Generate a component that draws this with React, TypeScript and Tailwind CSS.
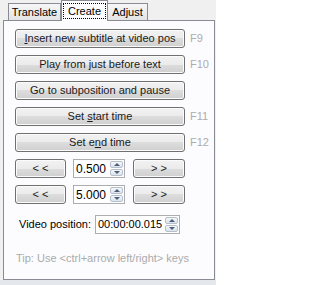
import type { ReactNode } from 'react';

const font = { fontFamily: '"Liberation Sans", Arial, sans-serif' };

function WinButton({ width, children }: { width: string; children: ReactNode }) {
  return (
    <div
      className={`${width} h-[19px] shrink-0 flex items-center justify-center rounded-[3px] border border-[#707070] bg-[linear-gradient(to_bottom,#f2f2f2_0%,#ebebeb_50%,#dddddd_50%,#cfcfcf_100%)] shadow-[inset_0_0_0_1px_#fbfbfb] text-[11px] leading-none text-[#1a1a1a]`}
    >
      {children}
    </div>
  );
}

function Spin() {
  return (
    <div className="flex flex-col w-[13px] h-[15px] gap-[1px]">
      <div className="flex-1 flex items-center justify-center rounded-[2px] border border-[#b6bfcc] bg-[linear-gradient(to_bottom,#f5f7fa,#dde3eb)]">
        <div className="w-0 h-0 border-l-[3px] border-r-[3px] border-b-[3px] border-l-transparent border-r-transparent border-b-[#4a5f7d]" />
      </div>
      <div className="flex-1 flex items-center justify-center rounded-[2px] border border-[#b6bfcc] bg-[linear-gradient(to_bottom,#f5f7fa,#dde3eb)]">
        <div className="w-0 h-0 border-l-[3px] border-r-[3px] border-t-[3px] border-l-transparent border-r-transparent border-t-[#4a5f7d]" />
      </div>
    </div>
  );
}

function NumField({ width, value, size }: { width: string; value: string; size: string }) {
  return (
    <div
      className={`${width} h-[19px] shrink-0 flex items-center justify-between border border-[#abadb3] bg-white pl-[2px] pr-[1px]`}
    >
      <span className={`${size} leading-none text-black`}>{value}</span>
      <Spin />
    </div>
  );
}

function KeyHint({ label }: { label: string }) {
  return <span className="text-[11px] leading-none text-[#adadad]">{label}</span>;
}

export default function App() {
  return (
    <div className="w-[216px] h-[285px] bg-[#f0f0f0] flex flex-col overflow-hidden" style={font}>
      {/* tab strip */}
      <div className="flex items-end h-[20px] pl-[8px]">
        <div className="w-[53px] h-[17px] flex items-center justify-center border border-b-0 border-[#898c95] bg-[linear-gradient(to_bottom,#f7f7f7,#e3e3e3)] text-[11px] leading-none text-black">
          Translate
        </div>
        <div className="relative z-10 -mb-px w-[47px] h-[21px] flex items-start justify-center pt-[2px] border border-b-0 border-[#898c95] bg-[#fcfcfe]">
          <span className="border border-dotted border-black px-[4px] h-[16px] flex items-center text-[11px] leading-none text-black">
            Create
          </span>
        </div>
        <div className="w-[40px] h-[17px] flex items-center justify-center border border-b-0 border-l-0 border-[#898c95] bg-[linear-gradient(to_bottom,#f7f7f7,#e3e3e3)] text-[11px] leading-none text-black">
          Adjust
        </div>
      </div>

      {/* tab page */}
      <div className="ml-[3px] w-[212px] h-[260px] border border-[#898c95] bg-[#fcfcfe] pt-[8px] pl-[11px] flex flex-col">
        <div className="flex flex-col gap-[7px]">
          <div className="flex items-center gap-[5px]">
            <WinButton width="w-[170px]">
              <span>
                <span className="underline">I</span>nsert new subtitle at video pos
              </span>
            </WinButton>
            <KeyHint label="F9" />
          </div>
          <div className="flex items-center gap-[5px]">
            <WinButton width="w-[170px]">Play from just before text</WinButton>
            <KeyHint label="F10" />
          </div>
          <div className="flex items-center gap-[5px]">
            <WinButton width="w-[170px]">Go to subposition and pause</WinButton>
          </div>
          <div className="flex items-center gap-[5px]">
            <WinButton width="w-[170px]">
              <span>
                Set <span className="underline">s</span>tart time
              </span>
            </WinButton>
            <KeyHint label="F11" />
          </div>
          <div className="flex items-center gap-[5px]">
            <WinButton width="w-[170px]">
              <span>
                Set e<span className="underline">n</span>d time
              </span>
            </WinButton>
            <KeyHint label="F12" />
          </div>
          <div className="flex items-center">
            <WinButton width="w-[51px]">&lt; &lt;</WinButton>
            <div className="ml-[7px]">
              <NumField width="w-[52px]" value="0.500" size="text-[12px]" />
            </div>
            <div className="ml-[8px]">
              <WinButton width="w-[52px]">&gt; &gt;</WinButton>
            </div>
          </div>
          <div className="flex items-center">
            <WinButton width="w-[51px]">&lt; &lt;</WinButton>
            <div className="ml-[7px]">
              <NumField width="w-[52px]" value="5.000" size="text-[12px]" />
            </div>
            <div className="ml-[8px]">
              <WinButton width="w-[52px]">&gt; &gt;</WinButton>
            </div>
          </div>
        </div>

        <div className="mt-[11px] flex items-center pl-[4px]">
          <span className="w-[76px] shrink-0 text-[11px] leading-none text-black">Video position:</span>
          <NumField width="w-[85px]" value="00:00:00.015" size="text-[11px]" />
        </div>

        <div className="mt-[18px] pl-[1px] text-[11px] leading-[13px] text-[#ababab]">
          Tip: Use &lt;ctrl+arrow left/right&gt; keys
        </div>
      </div>

      <div className="mt-auto h-[5px] bg-[#e4e8ed]" />
    </div>
  );
}
